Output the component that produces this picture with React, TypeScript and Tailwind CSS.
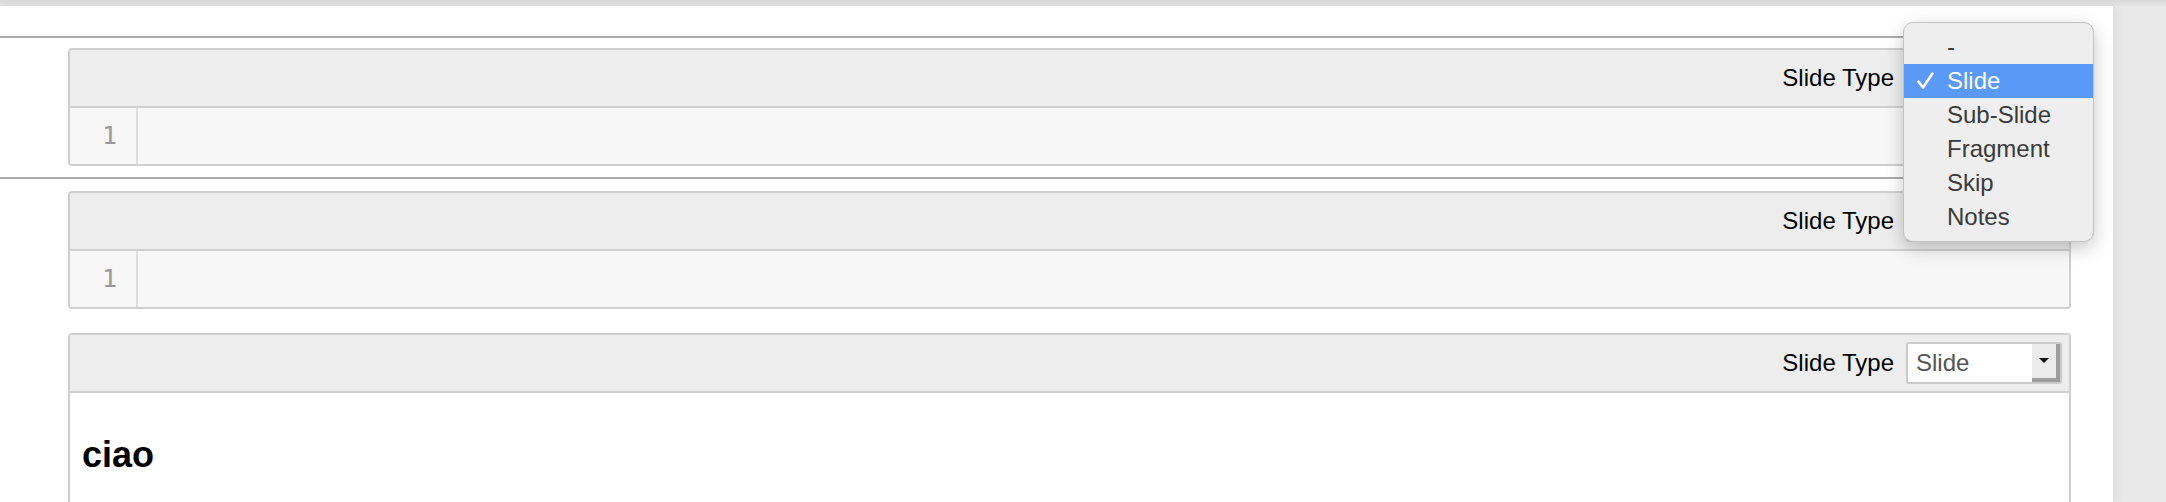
import React from 'react';

const menuOptions = ['-', 'Slide', 'Sub-Slide', 'Fragment', 'Skip', 'Notes'];

const SlideSelect: React.FC<{ value: string }> = ({ value }) => (
  <div className="flex h-[42px] w-[156px] rounded-[3px] border-2 border-[#cbcbcb] bg-white">
    <div className="flex-1 pl-[8px] text-[24px] leading-[38px] text-[#555555]">{value}</div>
    <div className="flex w-[28px] items-center justify-center border-r-[4px] border-b-[4px] border-[#9c9c9c] bg-[#ececec] pb-[2px]">
      <svg width="10" height="5" viewBox="0 0 10 5">
        <path d="M0 0h10L5 5z" fill="#111111" />
      </svg>
    </div>
  </div>
);

const CellHeader: React.FC = () => (
  <div className="flex h-[58px] items-center justify-end gap-[12px] border-b-2 border-[#cfcfcf] bg-[#ededed] pr-[7px]">
    <span className="text-[24px] text-black">Slide Type</span>
    <SlideSelect value="Slide" />
  </div>
);

const CodeCell: React.FC = () => (
  <div className="w-[2003px] overflow-hidden rounded-[4px] border-2 border-[#cfcfcf]">
    <CellHeader />
    <div className="flex h-[56px] bg-[#f7f7f7]">
      <div
        className="flex w-[68px] items-center justify-end border-r-2 border-[#dddddd] pr-[19px] text-[25px] text-[#999999]"
        style={{ fontFamily: '"DejaVu Sans Mono", "Liberation Mono", monospace' }}
      >
        1
      </div>
      <div className="flex-1" />
    </div>
  </div>
);

const MarkdownCell: React.FC = () => (
  <div className="h-[200px] w-[2003px] rounded-t-[4px] border-2 border-[#cfcfcf]">
    <CellHeader />
    <div className="bg-white pt-[40px] pl-[12px]">
      <h2 className="text-[36px] font-bold leading-[43px] text-black">ciao</h2>
    </div>
  </div>
);

// macOS style check glyph for the chosen menu entry
const CheckMark: React.FC = () => (
  <svg width="17" height="17" viewBox="0 0 17 17">
    <path
      d="M1.5 9.5 L6 15.5 L15.5 1.5"
      fill="none"
      stroke="currentColor"
      strokeWidth="2.6"
      strokeLinecap="round"
      strokeLinejoin="round"
    />
  </svg>
);

const SlideTypeMenu: React.FC = () => (
  <div className="absolute left-[1903px] top-[22px] z-20 h-[220px] w-[191px] rounded-[10px] border border-[#c2c2c2] bg-[#eeeeee] py-[7px] shadow-[0_6px_18px_rgba(0,0,0,0.22)]">
    {menuOptions.map(option => {
      const active = option === 'Slide';
      return (
        <div
          key={option}
          className={`flex h-[34px] items-center text-[24px] ${
            active ? 'bg-[#5a99f5] text-white' : 'text-[#3a3a3a]'
          }`}
        >
          <span className="flex w-[43px] items-center pl-[13px] pb-[2px]">
            {active && <CheckMark />}
          </span>
          <span>{option}</span>
        </div>
      );
    })}
  </div>
);

export default function App() {
  return (
    <div
      className="relative flex h-[502px] w-[2166px] flex-col overflow-hidden bg-[#e9e9e9]"
      style={{ fontFamily: '"Liberation Sans", Arial, sans-serif' }}
    >
      <div className="h-[6px] shrink-0 bg-linear-to-b from-[#dadada] to-[#e6e6e6]" />
      <div className="flex min-h-0 flex-1">
        <div className="relative z-10 w-[2113px] bg-white pt-[30px] shadow-[3px_0_8px_rgba(0,0,0,0.07)]">
          <div className="w-[2090px] border-y-2 border-[#ababab] pt-[10px] pb-[11px] pl-[68px]">
            <CodeCell />
          </div>
          <div className="mt-[12px] pl-[68px]">
            <CodeCell />
          </div>
          <div className="mt-[24px] pl-[68px]">
            <MarkdownCell />
          </div>
        </div>
        <div className="flex-1 bg-[#e9e9e9]" />
      </div>
      <SlideTypeMenu />
    </div>
  );
}
